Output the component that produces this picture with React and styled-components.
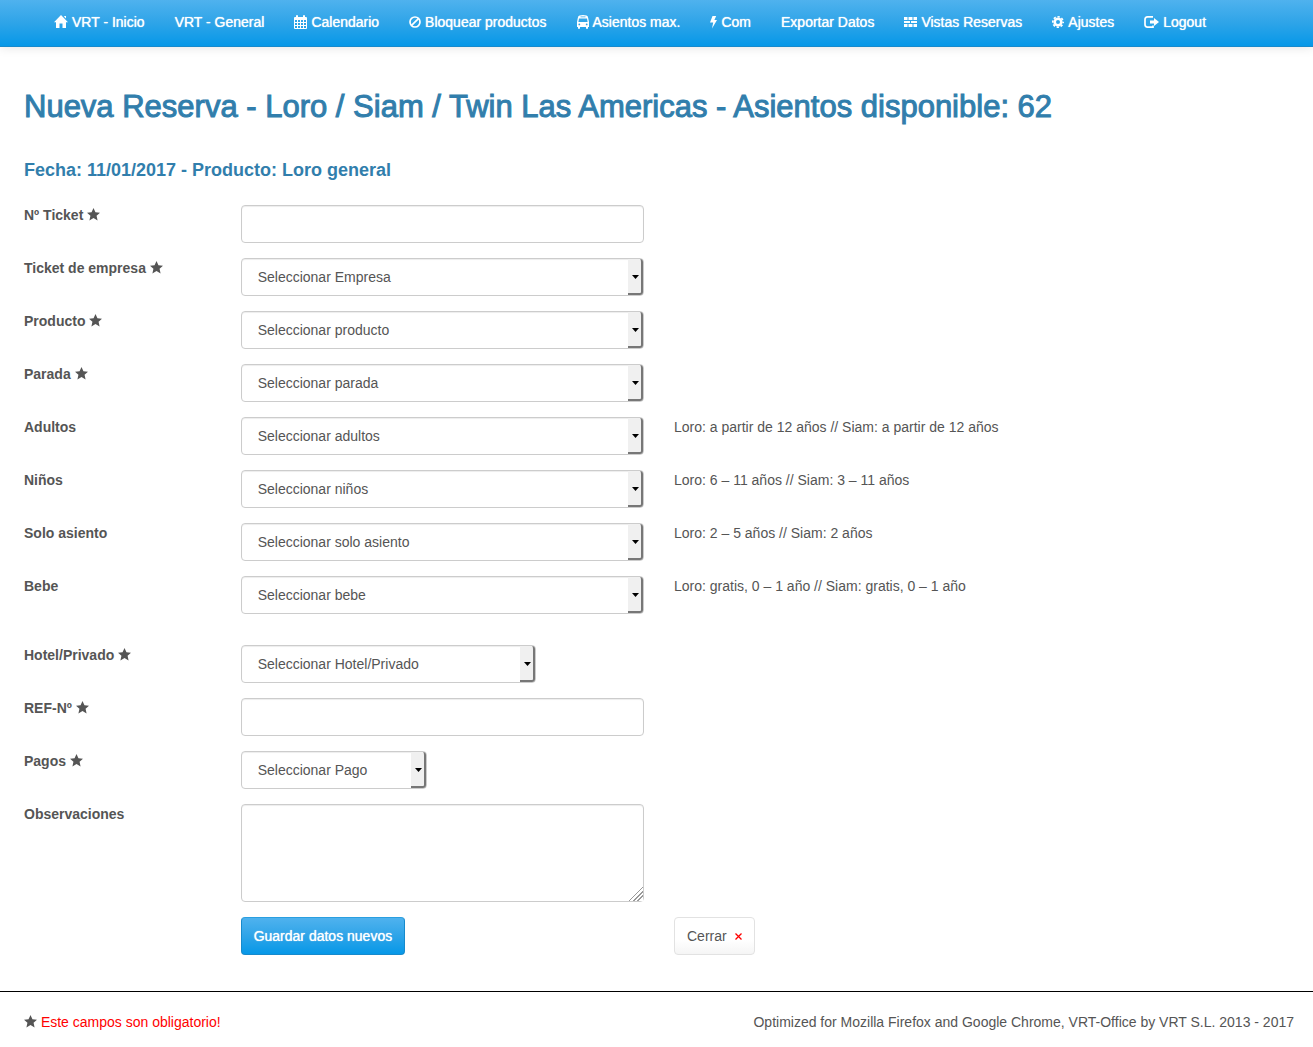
import styled, { createGlobalStyle } from "styled-components";

const navItems = [
  { label: "VRT - Inicio", icon: "home" },
  { label: "VRT - General" },
  { label: "Calendario", icon: "calendar" },
  { label: "Bloquear productos", icon: "ban" },
  { label: "Asientos max.", icon: "bus" },
  { label: "Com", icon: "flash" },
  { label: "Exportar Datos" },
  { label: "Vistas Reservas", icon: "grid" },
  { label: "Ajustes", icon: "cog" },
  { label: "Logout", icon: "logout" },
];

const fields = [
  { id: "ticket", label: "Nº Ticket", required: true },
  {
    id: "empresa",
    label: "Ticket de empresa",
    required: true,
    option: "Seleccionar Empresa",
  },
  {
    id: "producto",
    label: "Producto",
    required: true,
    option: "Seleccionar producto",
  },
  {
    id: "parada",
    label: "Parada",
    required: true,
    option: "Seleccionar parada",
  },
  {
    id: "adultos",
    label: "Adultos",
    option: "Seleccionar adultos",
    help: "Loro: a partir de 12 años // Siam: a partir de 12 años",
  },
  {
    id: "ninos",
    label: "Niños",
    option: "Seleccionar niños",
    help: "Loro: 6 – 11 años // Siam: 3 – 11 años",
  },
  {
    id: "asiento",
    label: "Solo asiento",
    option: "Seleccionar solo asiento",
    help: "Loro: 2 – 5 años // Siam: 2 años",
  },
  {
    id: "bebe",
    label: "Bebe",
    option: "Seleccionar bebe",
    help: "Loro: gratis, 0 – 1 año // Siam: gratis, 0 – 1 año",
  },
  {
    id: "hotel",
    label: "Hotel/Privado",
    required: true,
    option: "Seleccionar Hotel/Privado",
    width: "295px",
    spaced: true,
  },
  { id: "ref", label: "REF-Nº", required: true },
  {
    id: "pagos",
    label: "Pagos",
    required: true,
    option: "Seleccionar Pago",
    width: "186px",
  },
];

const icons = {
  home: {
    w: 14,
    art: <path d="M7 0 14 7.3H12V13H8.5V8.5H5.5V13H2V7.3H0L7 0ZM10.2 1H12V3.6L10.2 1.8Z" />,
  },
  calendar: {
    w: 13,
    art: (
      <path
        fillRule="evenodd"
        d="M2 2V1Q2 0 3 0T4 1V2H9V1Q9 0 10 0T11 1V2H12Q13 2 13 3V13Q13 14 12 14H1Q0 14 0 13V3Q0 2 1 2ZM1 5V7H3V5ZM4 5V7H6V5ZM7 5V7H9V5ZM10 5V7H12V5ZM1 8V10H3V8ZM4 8V10H6V8ZM7 8V10H9V8ZM10 8V10H12V8ZM1 11V13H3V11ZM4 11V13H6V11ZM7 11V13H9V11ZM10 11V13H12V11Z"
      />
    ),
  },
  ban: {
    w: 12,
    art: (
      <g fill="none" stroke="currentColor" strokeWidth="1.7">
        <circle cx="6" cy="7" r="5" />
        <path d="M2.6 10.4 9.4 3.6" />
      </g>
    ),
  },
  bus: {
    w: 12,
    art: (
      <path
        fillRule="evenodd"
        d="M2.500 .6Q6 -.4 9.500 .6Q11 1.100 11.200 3L12 7V12H11V13Q11 14 10 14T9 13V12H3V13Q3 14 2 14T1 13V12H0V7L.8 3Q1 1.100 2.500 .6ZM3.500 1.500V2.300H8.500V1.500ZM2 3.400 1.400 7H10.600L10 3.400ZM2.300 8.500A.9 .9 0 1 0 2.300 10.300A.9 .9 0 1 0 2.300 8.500ZM9.700 8.500A.9 .9 0 1 0 9.700 10.300A.9 .9 0 1 0 9.700 8.500Z"
      />
    ),
  },
  flash: {
    w: 7,
    art: <path d="M2.500 1H6.200L4.400 5H7L2 13.500 3.200 7.500H0Z" />,
  },
  grid: {
    w: 13,
    art: (
      <path d="M0 2H3.500V5H0ZM4.500 2H8.500V5H4.500ZM9.500 2H13V5H9.500ZM0 6H6V8H0ZM7 6H13V8H7ZM0 9H3.500V12H0ZM4.500 9H8.500V12H4.500ZM9.500 9H13V12H9.500Z" />
    ),
  },
  cog: {
    w: 12,
    art: (
      <>
        <circle
          cx="6"
          cy="7"
          r="3.300"
          fill="none"
          stroke="currentColor"
          strokeWidth="2.600"
        />
        <circle
          cx="6"
          cy="7"
          r="5.200"
          fill="none"
          stroke="currentColor"
          strokeWidth="1.600"
          strokeDasharray="2.300 1.784"
          strokeDashoffset="1.150"
        />
      </>
    ),
  },
  logout: {
    w: 15,
    art: (
      <>
        <path
          d="M9 1.900H3.500Q1 1.900 1 4.400V9.600Q1 12.100 3.500 12.100H9V10.500"
          fill="none"
          stroke="currentColor"
          strokeWidth="1.700"
        />
        <path d="M6 5.500H10V3L15 7 10 11V8.500H6Z" />
      </>
    ),
  },
};

const NavIcon = ({ name }) => {
  const { w, art } = icons[name];
  return (
    <svg width={w} height="14" viewBox={`0 0 ${w} 14`} fill="currentColor" aria-hidden="true">
      {art}
    </svg>
  );
};

const Star = () => (
  <StarIcon viewBox="0 0 14 14" aria-hidden="true">
    <path d="M7 0 9.100 4.700 14 5.200 10.300 8.400 11.400 13.400 7 10.800 2.600 13.400 3.700 8.400 0 5.200 4.900 4.700Z" />
  </StarIcon>
);

const Field = ({ id, label, required, option, help, width, spaced }) => (
  <Row $spaced={spaced}>
    <Label htmlFor={id}>
      {label} {required && <Star />}
    </Label>
    {option ? (
      <SelectBox $width={width}>
        <Select id={id} name={id}>
          <option>{option}</option>
        </Select>
        <Arrow aria-hidden="true">
          <svg width="7" height="4" viewBox="0 0 7 4">
            <path d="M0 0H7L3.500 4Z" />
          </svg>
        </Arrow>
      </SelectBox>
    ) : (
      <Input id={id} name={id} type="text" />
    )}
    {help && <Help>{help}</Help>}
  </Row>
);

const App = () => {
  return (
    <>
      <GlobalStyle />
      <Navbar>
        <NavList>
          {navItems.map(({ label, icon }) => (
            <li key={label}>
              <NavLink href="#">
                {icon && <NavIcon name={icon} />}
                {label}
              </NavLink>
            </li>
          ))}
        </NavList>
      </Navbar>
      <Main>
        <Title>
          Nueva Reserva - Loro / Siam / Twin Las Americas - Asientos disponible:
          62
        </Title>
        <Subtitle>Fecha: 11/01/2017 - Producto: Loro general</Subtitle>
        <form onSubmit={(e) => e.preventDefault()}>
          {fields.map((field) => (
            <Field key={field.id} {...field} />
          ))}
          <Row>
            <Label htmlFor="observaciones">Observaciones</Label>
            <TextArea id="observaciones" name="observaciones" />
          </Row>
          <Row>
            <SaveCell>
              <SaveButton type="submit">Guardar datos nuevos</SaveButton>
            </SaveCell>
            <CloseCell>
              <CloseButton type="button">
                Cerrar
                <svg width="7" height="8" viewBox="0 0 7 8" aria-hidden="true">
                  <path d="M.5 1.500 6.500 7.500M6.500 1.500 .5 7.500" stroke="red" strokeWidth="1.300" />
                </svg>
              </CloseButton>
            </CloseCell>
          </Row>
        </form>
      </Main>
      <Footer>
        <Required>
          <Star /> <span>Este campos son obligatorio!</span>
        </Required>
        <span>
          Optimized for Mozilla Firefox and Google Chrome, VRT-Office by VRT
          S.L. 2013 - 2017
        </span>
      </Footer>
    </>
  );
};
export default App;

const GlobalStyle = createGlobalStyle`
  * {
    box-sizing: border-box;
  }

  body {
    margin: 0;
    background: #fff;
    color: #555;
    font-family: "Liberation Sans", Arial, sans-serif;
    font-size: 14px;
    line-height: 20px;
  }
`;

const Navbar = styled.nav`
  padding: 0 39px;
  border-bottom: 1px solid #178acc;
  background: linear-gradient(#4fb2ee, #2ea4e8 50%, #0698e8);
  box-shadow: 0 1px 10px rgba(0, 0, 0, 0.1);
`;

const NavList = styled.ul`
  display: flex;
  flex-wrap: wrap;
  margin: 0;
  padding: 0;
  list-style: none;
`;

const NavLink = styled.a`
  display: flex;
  align-items: center;
  gap: 4px;
  padding: 12px 15px 14px;
  color: #fff;
  text-decoration: none;
  text-shadow: 0 0 1px #fff;
  white-space: nowrap;
`;

const Main = styled.main`
  padding: 41px 19px 21px 24px;
`;

const Title = styled.h1`
  margin: 0 0 34px;
  color: #317eac;
  font-size: 31px;
  font-weight: normal;
  line-height: 38px;
  -webkit-text-stroke: 1px #317eac;
`;

const Subtitle = styled.h2`
  margin: 0 0 25px;
  color: #317eac;
  font-size: 18px;
  line-height: 20px;
`;

const Row = styled.div`
  display: grid;
  grid-template-columns: repeat(12, minmax(0, 1fr));
  column-gap: 30px;
  align-items: start;
  margin-top: ${({ $spaced }) => ($spaced ? "31px" : "0")};
  margin-bottom: 15px;
`;

const Label = styled.label`
  grid-column: span 2;
  font-weight: bold;
`;

const StarIcon = styled.svg`
  width: 13px;
  height: 13px;
  fill: #555;
  vertical-align: -1px;
`;

const Input = styled.input`
  grid-column: span 4;
  width: 100%;
  height: 38px;
  padding: 8px 12px;
  border: 1px solid #ccc;
  border-radius: 4px;
  background: #fff;
  box-shadow: inset 0 1px 1px rgba(0, 0, 0, 0.075);
  color: #555;
  font: inherit;
`;

const TextArea = styled(Input).attrs({ as: "textarea" })`
  display: block;
  height: 98px;
  resize: both;

  &::-webkit-resizer {
    background: linear-gradient(
      135deg,
      transparent 50%,
      #999 50% 56%,
      #fff 56% 64%,
      #999 64% 70%,
      #fff 70% 78%,
      #999 78% 84%,
      #fff 84%
    );
  }
`;

const SelectBox = styled.div`
  position: relative;
  grid-column: span 4;
  width: ${({ $width }) => $width || "100%"};
`;

const Select = styled(Input).attrs({ as: "select" })`
  display: block;
  padding: 8px 32px 8px 16px;
  appearance: none;
`;

// old Firefox style drop-down button, laid over the right end of the select
const Arrow = styled.span`
  position: absolute;
  top: 1px;
  right: 1px;
  bottom: 1px;
  display: flex;
  align-items: center;
  justify-content: center;
  width: 15px;
  padding: 2px 0 0 2px;
  border-right: 2px solid #777;
  border-bottom: 2px solid #777;
  border-radius: 0 3px 3px 0;
  background: #f0f0f0;
  pointer-events: none;
`;

const Help = styled.span`
  grid-column: span 6;
`;

const SaveCell = styled.div`
  grid-column: 3 / span 4;
`;

const CloseCell = styled.div`
  grid-column: span 6;
`;

const Button = styled.button`
  display: inline-flex;
  align-items: center;
  height: 38px;
  padding: 0 12px;
  border-radius: 4px;
  font: inherit;
  cursor: pointer;
`;

const SaveButton = styled(Button)`
  border: 1px solid #178acc;
  border-top-color: #2a9fe0;
  background: linear-gradient(#4fb2ee, #2ea4e8 50%, #0698e8);
  color: #fff;
  text-shadow: 0 0 1px #fff;
`;

const CloseButton = styled(Button)`
  gap: 8px;
  border: 1px solid #e2e2e2;
  background: linear-gradient(#fff, #fff 60%, #f5f5f5);
  color: #555;
`;

const Footer = styled.footer`
  display: flex;
  flex-wrap: wrap;
  justify-content: space-between;
  padding: 20px 19px 14px 24px;
  border-top: 1px solid #000;
`;

const Required = styled.span`
  color: red;
`;
